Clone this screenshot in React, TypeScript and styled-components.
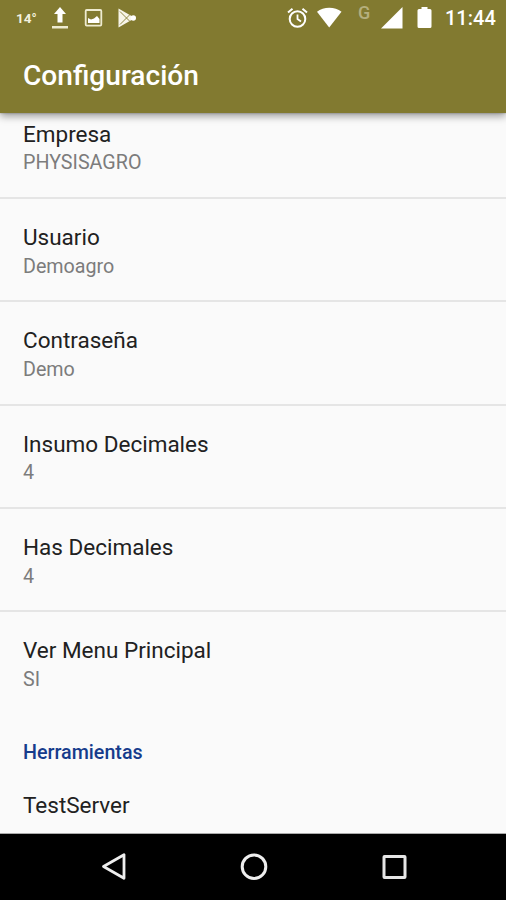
import React from "react";
import styled, { createGlobalStyle } from "styled-components";

const GlobalStyle = createGlobalStyle`
  * { box-sizing: border-box; }
  body { margin: 0; background: #fafafa; font-family: Roboto, sans-serif; }
`;

const Screen = styled.div`
  display: flex;
  flex-direction: column;
  width: 506px;
  height: 900px;
  overflow: hidden;
  background: #fafafa;
`;

const Header = styled.header`
  flex: none;
  position: relative;
  z-index: 1;
  height: 112.5px;
  background: #827a30;
  color: #fff;
  box-shadow: 0 3px 8px rgba(0, 0, 0, 0.4), 0 0 2px rgba(0, 0, 0, 0.3);
`;

const StatusBar = styled.div`
  display: flex;
  align-items: center;
  height: 35px;
  padding: 0 11px 0 16px;
`;

const StatusGroup = styled.div<{ $end?: boolean }>`
  display: flex;
  align-items: center;
  margin-left: ${(p) => (p.$end ? "auto" : "0")};
`;

const StatusIcon = styled.svg<{ $gap: number }>`
  display: block;
  flex: none;
  margin-left: ${(p) => p.$gap}px;
`;

const Temperature = styled.span`
  width: 20px;
  font-size: 13.5px;
  font-weight: 700;
  line-height: 20px;
  color: #f3f1df;
`;

const Network = styled.span`
  width: 12px;
  margin-left: 16px;
  padding-bottom: 10px;
  font-size: 18px;
  font-weight: 500;
  line-height: 20px;
  color: #b5af7e;
`;

const Clock = styled.span`
  width: 50px;
  margin-left: 13px;
  font-size: 20px;
  font-weight: 500;
  line-height: 24px;
  white-space: nowrap;
`;

const Title = styled.h1`
  margin: 0;
  padding: 24px 23px 0;
  font-size: 28.1px;
  font-weight: 500;
  line-height: 33px;
`;

const Settings = styled.main`
  flex: 1;
  min-height: 0;
  overflow: hidden;
  border-bottom: 1px solid #aaa;
`;

const Preferences = styled.ul`
  margin: -16.9px 0 0;
  padding: 0;
  list-style: none;
`;

const Preference = styled.li<{ $divider: boolean }>`
  height: 103.3px;
  padding: 24.2px 23px 0;
  border-bottom: 2px solid ${(p) => (p.$divider ? "#e5e5e5" : "transparent")};
`;

const Label = styled.div`
  font-size: 22.5px;
  line-height: 28px;
  color: #212121;
`;

const Value = styled.div`
  padding-top: 3.7px;
  font-size: 19.7px;
  line-height: 24px;
  color: #7c7c7c;
`;

const Category = styled.h2`
  margin: 0;
  padding: 25px 23px 0;
  font-size: 19.7px;
  font-weight: 500;
  line-height: 26px;
  color: #163c8c;
`;

const Action = styled.div`
  padding: 24.700px 23px 0;
`;

const NavBar = styled.nav`
  flex: none;
  display: flex;
  align-items: center;
  justify-content: space-between;
  height: 66px;
  padding: 0 97.500px 0 98.500px;
  background: #000;
`;

const preferences = [
  ["Empresa", "PHYSISAGRO"],
  ["Usuario", "Demoagro"],
  ["Contraseña", "Demo"],
  ["Insumo Decimales", "4"],
  ["Has Decimales", "4"],
  ["Ver Menu Principal", "SI"],
];

export default function App() {
  return (
    <Screen>
      <GlobalStyle />
      <Header>
        <StatusBar>
          <StatusGroup>
            <Temperature>14°</Temperature>
            <StatusIcon $gap={15} width="18" height="24" viewBox="0 0 18 24">
              <path d="M9 1l6 7h-3.5v8.5h-5V8H3z" fill="#fff" />
              <path d="M1 20h16v2.5H1z" fill="#eeebd0" />
            </StatusIcon>
            <StatusIcon $gap={15} width="19" height="24" viewBox="0 0 19 24">
              <rect x="1.7" y="4" width="15.6" height="15.6" rx="1" fill="none" stroke="#eeebd0" strokeWidth="1.8" />
              <path d="M4 17v-5l3 1.5 3-1 3-2.5 2.5 3v4z" fill="#fff" />
            </StatusIcon>
            <StatusIcon $gap={14} width="20" height="24" viewBox="0 0 20 24">
              <path d="M1.5 2.5L18 12 1.5 21.5z" fill="#f7f5ea" />
              <path d="M3 5.500L13 15.500M3 18.500L13 8.500" stroke="#827a30" strokeWidth="0.9" />
              <circle cx="16.3" cy="12" r="2.7" fill="#fff" />
            </StatusIcon>
          </StatusGroup>
          <StatusGroup $end>
            <StatusIcon $gap={0} width="22" height="22" viewBox="0 0 22 22" fill="none" stroke="#fff">
              <circle cx="11.5" cy="12" r="7.8" strokeWidth="2" />
              <path d="M11.500 7.500V12l3.500 2.500" strokeWidth="1.8" />
              <path d="M2 5.600L6.500 1.800M21 5.600L16.500 1.800" strokeWidth="2" />
            </StatusIcon>
            <StatusIcon $gap={8} width="26" height="22" viewBox="0 0 26 22">
              <path d="M1 4.800C7.500-.6 19-.6 25.500 4.800L13.200 20.500z" fill="#fff" />
            </StatusIcon>
            <Network>G</Network>
            <StatusIcon $gap={11} width="22" height="22" viewBox="0 0 22 22">
              <path d="M0 21.500L21.500 0v21.500z" fill="#fff" />
            </StatusIcon>
            <StatusIcon $gap={14} width="15" height="22" viewBox="0 0 15 22">
              <path d="M4.500 0h6v2h2.500q1.500 0 1.500 1.500v16q0 1.500-1.500 1.500H2Q.5 21 .5 19.500V3.500Q.5 2 2 2h2.500z" fill="#fff" />
            </StatusIcon>
            <Clock>11:44</Clock>
          </StatusGroup>
        </StatusBar>
        <Title>Configuración</Title>
      </Header>
      <Settings>
        <Preferences>
          {preferences.map(([label, value], i) => (
            <Preference key={label} $divider={i < preferences.length - 1}>
              <Label>{label}</Label>
              <Value>{value}</Value>
            </Preference>
          ))}
        </Preferences>
        <Category>Herramientas</Category>
        <Action>
          <Label>TestServer</Label>
        </Action>
      </Settings>
      <NavBar>
        <svg width="30" height="30" viewBox="0 0 30 30" fill="none" stroke="#eee" strokeWidth="2.8" strokeLinejoin="round">
          <path d="M25 2.700v23.600L4.500 14.500z" />
        </svg>
        <svg width="30" height="30" viewBox="0 0 30 30" fill="none" stroke="#eee" strokeWidth="3">
          <circle cx="15" cy="14.700" r="11.800" />
        </svg>
        <svg width="30" height="30" viewBox="0 0 30 30" fill="none" stroke="#e6e6e6" strokeWidth="3">
          <rect x="5" y="4.500" width="21" height="21" rx="0.500" />
        </svg>
      </NavBar>
    </Screen>
  );
}
